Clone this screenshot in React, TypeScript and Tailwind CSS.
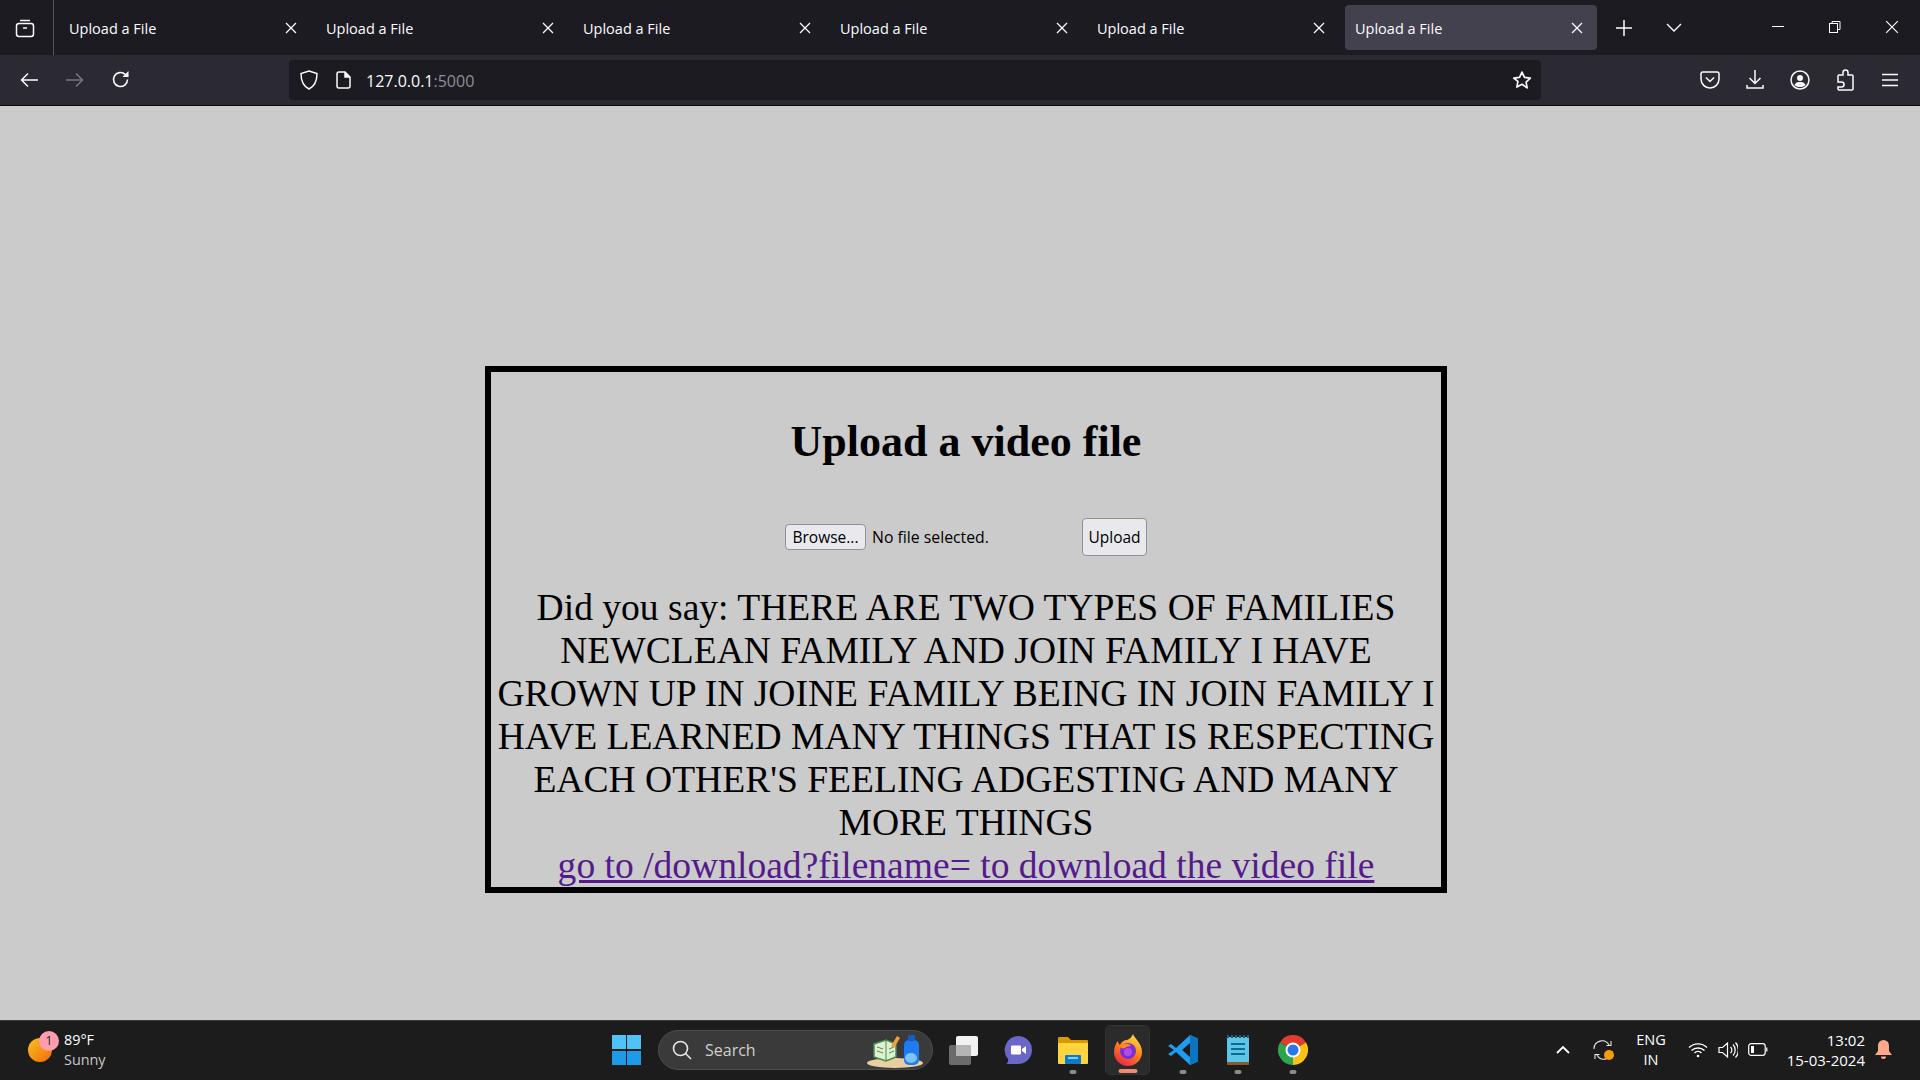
const ui = "font-['Open_Sans','Noto_Sans',sans-serif]";

const XIcon = ({ size = 12, w = 1.3 }: { size?: number; w?: number }) => (
  <svg width={size} height={size} viewBox="0 0 12 12" fill="none" stroke="#fbfbfe" strokeWidth={w}>
    <path d="M1 1l10 10M11 1L1 11" />
  </svg>
);

const Tab = ({ active }: { active?: boolean }) => (
  <div className={active ? "flex h-[45px] w-[252px] items-center justify-between rounded-[4px] bg-[#42414d] pl-[10px] pr-[14px]" : "flex h-[45px] w-[257px] items-center justify-between pl-[15px] pr-[14px]"}>
    <span className={`${ui} mt-[2px] text-[14.5px] text-[#fbfbfe]`}>Upload a File</span>
    <XIcon />
  </div>
);

const TabBar = () => (
  <div className="flex h-[55px] items-center bg-[#1c1b22]">
    <div className="flex h-[55px] w-[54px] items-center justify-center border-r border-[#55545c] pr-[4px]">
      <svg width="20" height="20" viewBox="0 0 20 20" fill="none" stroke="#fbfbfe" strokeWidth="1.5">
        <path d="M5 2.500h10" />
        <rect x="1.500" y="5.500" width="17" height="13" rx="2.500" />
        <path d="M8 10h4" />
      </svg>
    </div>
    <Tab />
    <Tab />
    <Tab />
    <Tab />
    <Tab />
    <div className="ml-[6px]">
      <Tab active />
    </div>
    <div className="ml-[19px] flex w-[16px] justify-center">
      <svg width="16" height="16" viewBox="0 0 16 16" fill="none" stroke="#fbfbfe" strokeWidth="1.5">
        <path d="M8 0v16M0 8h16" />
      </svg>
    </div>
    <div className="ml-[34px]">
      <svg width="16" height="10" viewBox="0 0 16 10" fill="none" stroke="#fbfbfe" strokeWidth="1.4">
        <path d="M1 1l7 7 7-7" />
      </svg>
    </div>
    <div className="ml-[90px] mb-[2px] h-px w-[12px] bg-[#fbfbfe]" />
    <div className="ml-[45px] mb-[2px]">
      <svg width="12" height="14" viewBox="0 0 12 14" fill="none" stroke="#fbfbfe" strokeWidth="1">
        <rect x="0.500" y="3.500" width="8" height="9" />
        <path d="M3 3.500V1.500h8v8H8.500" />
      </svg>
    </div>
    <div className="ml-[44px] mb-[2px]">
      <XIcon size={14} w={1} />
    </div>
  </div>
);

const ToolBar = () => (
  <div className="flex h-[51px] items-center border-b border-[#0c0c0d] bg-[#2b2a33] pb-px">
    <div className="ml-[20px]">
      <svg width="18" height="16" viewBox="0 0 18 16" fill="none" stroke="#fbfbfe" strokeWidth="1.5">
        <path d="M18 8H1.500M8 1.500L1.500 8 8 14.500" />
      </svg>
    </div>
    <div className="ml-[28px]">
      <svg width="18" height="16" viewBox="0 0 18 16" fill="none" stroke="#77767e" strokeWidth="1.5">
        <path d="M0 8h16.500M10 1.500L16.500 8 10 14.500" />
      </svg>
    </div>
    <div className="ml-[27px]">
      <svg width="19" height="19" viewBox="0 0 19 19" fill="none" stroke="#fbfbfe" strokeWidth="1.6">
        <path d="M16.500 9.500a7 7 0 1 1-2.300-5.200L17 6.500" />
        <path d="M17.500 1v6h-6" fill="#fbfbfe" stroke="none" />
      </svg>
    </div>
    <div className="ml-[159px] flex h-[40px] w-[1252px] items-center rounded-[4px] bg-[#1c1b22]">
      <div className="ml-[11px]">
        <svg width="18" height="20" viewBox="0 0 18 20" fill="none" stroke="#fbfbfe" strokeWidth="1.5">
          <path d="M9 1l8 2.500c0 7-2 12.500-8 15.500C3 16 1 10.500 1 3.500z" />
        </svg>
      </div>
      <div className="ml-[18px]">
        <svg width="15" height="18" viewBox="0 0 15 18" fill="none" stroke="#fbfbfe" strokeWidth="1.5">
          <path d="M3 1h6l5 5v9a2 2 0 0 1-2 2H3a2 2 0 0 1-2-2V3a2 2 0 0 1 2-2z" />
          <path d="M9 1v5h5" fill="#fbfbfe" />
        </svg>
      </div>
      <span className={`${ui} ml-[15px] mt-[3px] text-[16px] text-[#fbfbfe]`}>
        127.0.0.1<span className="text-[#8f8f94]">:5000</span>
      </span>
      <div className="ml-auto mr-[9px]">
        <svg width="20" height="20" viewBox="0 0 24 24" fill="none" stroke="#fbfbfe" strokeWidth="2" strokeLinejoin="round">
          <path d="M12 2.500l3 6.400 7 .9-5.100 4.800 1.300 6.900L12 17.100l-6.200 3.400 1.300-6.900L2 9.800l7-.9z" />
        </svg>
      </div>
    </div>
    <div className="ml-[159px]">
      <svg width="20" height="18" viewBox="0 0 20 18" fill="none" stroke="#fbfbfe" strokeWidth="1.5">
        <path d="M3 1h14a2 2 0 0 1 2 2v5a9 9 0 0 1-18 0V3a2 2 0 0 1 2-2z" />
        <path d="M6 6.500l4 4 4-4" />
      </svg>
    </div>
    <div className="ml-[26px]">
      <svg width="18" height="20" viewBox="0 0 18 20" fill="none" stroke="#fbfbfe" strokeWidth="1.5">
        <path d="M9 0v13M3.500 8L9 13.500 14.500 8M1 15v3h16v-3" />
      </svg>
    </div>
    <div className="ml-[26px]">
      <svg width="20" height="20" viewBox="0 0 20 20" fill="none" stroke="#fbfbfe" strokeWidth="1.5">
        <circle cx="10" cy="10" r="9" />
        <circle cx="10" cy="8" r="3" fill="#fbfbfe" stroke="none" />
        <path d="M4.500 15c1-2.500 3-3 5.500-3s4.500.5 5.500 3c-1.500 1.500-3.500 2-5.500 2s-4-.5-5.500-2z" fill="#fbfbfe" stroke="none" />
      </svg>
    </div>
    <div className="ml-[26px]">
      <svg width="18" height="22" viewBox="0 0 18 22" fill="none" stroke="#fbfbfe" strokeWidth="1.5">
        <path d="M7 3.500a2.500 2.500 0 0 1 5 0V6h4a1 1 0 0 1 1 1v13a1 1 0 0 1-1 1H3a1 1 0 0 1-1-1v-2h3.500a2 2 0 0 0 0-5H2V7a1 1 0 0 1 1-1h4z" />
      </svg>
    </div>
    <div className="ml-[28px]">
      <svg width="16" height="14" viewBox="0 0 16 14" fill="none" stroke="#fbfbfe" strokeWidth="1.5">
        <path d="M0 1.500h16M0 7h16M0 12.500h16" />
      </svg>
    </div>
  </div>
);

const UploadBox = () => (
  <div className="ml-[485px] mt-[260px] flex h-[527px] w-[962px] flex-col border-[6px] border-black">
    <h1 className="mt-[45px] text-center font-['Liberation_Serif',serif] text-[44px] font-bold leading-[49px] text-black">
      Upload a video file
    </h1>
    <div className={`${ui} mt-[52px] flex h-[38px] items-center text-black`}>
      <button className="ml-[294px] h-[26px] w-[81px] rounded-[4px] border border-[#8f8f9d] bg-[#e9e9ed] pt-px text-[15.5px]">
        Browse...
      </button>
      <span className="ml-[6px] mt-[2px] w-[210px] text-[15.8px]">No file selected.</span>
      <button className="h-[38px] w-[65px] rounded-[4px] border border-[#8f8f9d] bg-[#e9e9ed] pt-[2px] text-[15.5px]">
        Upload
      </button>
    </div>
    <div className="mt-[30px] text-center font-['Liberation_Serif',serif] text-[37.55px] leading-[43px] text-black">
      <p>
        Did you say: THERE ARE TWO TYPES OF FAMILIES NEWCLEAN FAMILY AND JOIN FAMILY I HAVE GROWN UP IN JOINE FAMILY
        BEING IN JOIN FAMILY I HAVE LEARNED MANY THINGS THAT IS RESPECTING EACH OTHER'S FEELING ADGESTING AND MANY MORE
        THINGS
      </p>
      <a href="#" className="text-[#551a8b] underline">
        go to /download?filename= to download the video file
      </a>
    </div>
  </div>
);

const Dot = () => <div className="absolute bottom-[5px] left-1/2 h-[4px] w-[7px] -translate-x-1/2 rounded-full bg-[#8b8b8b]" />;

const TaskView = () => (
  <svg width="30" height="30" viewBox="0 0 30 30">
    <rect x="1" y="10" width="22" height="20" rx="2" fill="#6b6b6b" />
    <rect x="8" y="1" width="22" height="20" rx="2" fill="#f2f2f2" />
    <rect x="8" y="10" width="15" height="11" fill="#b5b5b5" />
  </svg>
);

const Meet = () => (
  <svg width="30" height="30" viewBox="0 0 30 30">
    <path d="M15 1a14 14 0 0 1 0 28H3c2-1 2.500-3 2-5A14 14 0 0 1 15 1z" fill="#6a67c9" />
    <path d="M9 10.500h8a1 1 0 0 1 1 1v7a1 1 0 0 1-1 1H9a1 1 0 0 1-1-1v-7a1 1 0 0 1 1-1zM19 14l4-3v8l-4-3z" fill="#fff" />
  </svg>
);

const Explorer = () => (
  <svg width="30" height="30" viewBox="0 0 30 30">
    <path d="M0 3a1 1 0 0 1 1-1h9l3 3h16a1 1 0 0 1 1 1v6H0z" fill="#d69b00" />
    <path d="M0 8h30v20a1 1 0 0 1-1 1H1a1 1 0 0 1-1-1z" fill="#ffd43f" />
    <rect x="7" y="20" width="16" height="9" rx="1" fill="#0f79c9" />
    <rect x="10" y="22" width="10" height="2" fill="#7fd0ff" />
  </svg>
);

const Firefox = () => (
  <svg width="30" height="32" viewBox="0 0 30 32">
    <defs>
      <linearGradient id="ff" x1="0.7" y1="0" x2="0.2" y2="1">
        <stop offset="0" stopColor="#ffe03a" />
        <stop offset="0.5" stopColor="#ff7a1a" />
        <stop offset="1" stopColor="#e5224f" />
      </linearGradient>
    </defs>
    <path d="M20 0c1 4 9 9 9 18a14 14 0 0 1-28 0C1 13 3 9 5 7c0 2 1 3 2 4 1-3 4-5 7-5 3-1 5-3 6-6z" fill="url(#ff)" />
    <circle cx="15" cy="17" r="8" fill="#7b2fd0" />
    <path d="M7 12c4-3 9-3 11 0-3 0-5 1-6 2-2 1-4 0-5-2z" fill="#ff8a1f" />
    <circle cx="15" cy="18" r="4" fill="#b04ae8" />
  </svg>
);

const VSCode = () => (
  <svg width="30" height="30" viewBox="0 0 30 30">
    <path d="M22 0l8 3.500v23L22 30 8 17l-5 4-3-2 6-4-6-4 3-2 5 4z" fill="#1f9cf0" />
    <path d="M22 0l8 3.500v23L22 30z" fill="#0d75bd" />
    <path d="M22 8l-8 7 8 7z" fill="#1c1c1c" />
  </svg>
);

const Notepad = () => (
  <svg width="24" height="30" viewBox="0 0 24 30">
    <rect x="1" y="2" width="22" height="28" rx="1" fill="#5cc6e8" />
    <rect x="1" y="27" width="22" height="3" fill="#8a5a2b" />
    <path d="M2 0v3M6 0v3M10 0v3M14 0v3M18 0v3M22 0v3" stroke="#1c5f7a" strokeWidth="2" />
    <path d="M5 9h14M5 14h14M5 19h14" stroke="#0b6c8f" strokeWidth="2" />
  </svg>
);

const Chrome = () => (
  <svg width="30" height="30" viewBox="0 0 30 30">
    <path d="M15 15L2 7.500A15 15 0 0 1 28 7.500z" fill="#e33b2e" />
    <path d="M15 15L28 7.500A15 15 0 0 1 15 30z" fill="#fbc116" />
    <path d="M15 15L15 30A15 15 0 0 1 2 7.500z" fill="#2fa44f" />
    <circle cx="15" cy="15" r="7.500" fill="#fff" />
    <circle cx="15" cy="15" r="5.500" fill="#2a76e8" />
  </svg>
);

const SearchArt = () => (
  <svg width="58" height="34" viewBox="0 0 58 34">
    <ellipse cx="28" cy="29" rx="28" ry="5" fill="#e8cfa0" />
    <path d="M7 10l12-4 10 4v13l-10 4-12-4z" fill="#dff0d0" stroke="#4d8a4d" strokeWidth="1.500" />
    <path d="M19 6v21M10 13l6 2M10 17l6 2M22 15l5-2M22 19l5-2" stroke="#4d8a4d" strokeWidth="1" />
    <path d="M24 12l6-10 3 2-6 10z" fill="#f5a03a" />
    <rect x="37" y="6" width="15" height="25" rx="5" fill="#1f7cf0" />
    <rect x="41" y="1" width="7" height="6" rx="1" fill="#145ec2" />
    <ellipse cx="44" cy="24" rx="6" ry="5" fill="#7ac4ff" />
  </svg>
);

const TaskBar = () => (
  <div className={`${ui} flex h-[60px] items-center border-t border-[#3a3a3a] bg-[#1c1c1c] pb-[2px] text-white`}>
    <div className="relative ml-[28px] h-[24px] w-[24px] rounded-full bg-gradient-to-br from-[#f6c21c] to-[#f2650f]">
      <div className="absolute left-[11px] top-[-7px] flex h-[20px] w-[20px] items-center justify-center rounded-full bg-[#ff9db0] text-[12px] text-[#1c1c1c]">
        1
      </div>
    </div>
    <div className="ml-[12px] w-[80px] text-[14.4px] leading-[20px]">
      <div>89°F</div>
      <div className="text-[#c8c8c8]">Sunny</div>
    </div>
    <div className="ml-[468px] flex h-[30px] w-[29px] flex-wrap content-between justify-between">
      <div className="h-[14px] w-[14px] bg-[#4fc3f7]" />
      <div className="h-[14px] w-[14px] bg-[#4fc3f7]" />
      <div className="h-[14px] w-[14px] bg-[#1e9be8]" />
      <div className="h-[14px] w-[14px] bg-[#1e9be8]" />
    </div>
    <div className="ml-[17px] flex h-[40px] w-[275px] items-center rounded-full border border-[#4d4d4d] bg-[#3a3a3a]">
      <div className="ml-[13px]">
        <svg width="20" height="20" viewBox="0 0 20 20" fill="none" stroke="#e8e8e8" strokeWidth="1.600">
          <circle cx="8.500" cy="8.500" r="7" />
          <path d="M13.500 13.500L19 19" />
        </svg>
      </div>
      <span className="ml-[13px] text-[16px] text-[#d0d0d0]">Search</span>
      <div className="ml-auto mr-[7px] mt-[2px]">
        <SearchArt />
      </div>
    </div>
    <div className="ml-[2px] flex h-[58px] items-center">
      <div className="flex h-[58px] w-[55px] items-center justify-center">
        <TaskView />
      </div>
      <div className="flex h-[58px] w-[55px] items-center justify-center">
        <Meet />
      </div>
      <div className="relative flex h-[58px] w-[55px] items-center justify-center">
        <Explorer />
        <Dot />
      </div>
      <div className="flex h-[58px] w-[55px] items-center justify-center">
        <div className="relative flex h-[50px] w-[45px] items-center justify-center rounded-[5px] border border-[#333] bg-[#2b2b2b]">
          <Firefox />
          <div className="absolute bottom-[1px] left-1/2 h-[4px] w-[19px] -translate-x-1/2 rounded-full bg-[#f28a6f]" />
        </div>
      </div>
      <div className="relative flex h-[58px] w-[55px] items-center justify-center">
        <VSCode />
        <Dot />
      </div>
      <div className="relative flex h-[58px] w-[55px] items-center justify-center">
        <Notepad />
        <Dot />
      </div>
      <div className="relative flex h-[58px] w-[55px] items-center justify-center">
        <Chrome />
        <Dot />
      </div>
    </div>
    <div className="ml-[236px]">
      <svg width="14" height="9" viewBox="0 0 14 9" fill="none" stroke="#fff" strokeWidth="1.800">
        <path d="M1 8l6-6 6 6" />
      </svg>
    </div>
    <div className="relative ml-[23px]">
      <svg width="20" height="20" viewBox="0 0 20 20" fill="none" stroke="#e8e8e8" strokeWidth="1.100">
        <path d="M1 9a8 8 0 0 1 15-4M18 1v4.500h-4.500M19 11a8 8 0 0 1-15 4M2 19v-4.500h4.500" />
      </svg>
      <div className="absolute bottom-0 right-[-1px] h-[10px] w-[10px] rounded-full bg-[#f79a0e]" />
    </div>
    <div className="ml-[18px] w-[40px] text-center text-[14.5px] leading-[20px]">
      <div>ENG</div>
      <div>IN</div>
    </div>
    <div className="ml-[17px]">
      <svg width="20" height="16" viewBox="0 0 20 16" fill="none" stroke="#fff" strokeWidth="1.400">
        <path d="M1 5.500a13 13 0 0 1 18 0M3.500 8.500a9.500 9.500 0 0 1 13 0M6.500 11a5 5 0 0 1 7 0" />
        <circle cx="10" cy="14" r="1.300" fill="#fff" stroke="none" />
      </svg>
    </div>
    <div className="ml-[10px]">
      <svg width="20" height="18" viewBox="0 0 20 18" fill="none" stroke="#fff" strokeWidth="1.200">
        <path d="M1 6.500h3.500L9.500 2v14l-5-4.500H1zM12.500 6a4 4 0 0 1 0 6M15 3.500a8 8 0 0 1 0 11M17.500 1.500a11 11 0 0 1 0 15" />
      </svg>
    </div>
    <div className="ml-[10px]">
      <svg width="20" height="13" viewBox="0 0 20 13" fill="none" stroke="#fff" strokeWidth="1.200">
        <rect x="0.700" y="0.700" width="16.500" height="11.600" rx="2.500" />
        <rect x="3" y="3" width="3" height="7" fill="#fff" stroke="none" />
        <path d="M18.800 4.500v4" />
      </svg>
    </div>
    <div className="ml-[5px] w-[92px] text-right text-[15px] leading-[20px]">
      <div>13:02</div>
      <div>15-03-2024</div>
    </div>
    <div className="ml-[10px]">
      <svg width="17" height="20" viewBox="0 0 17 20" fill="#ffa78a">
        <path d="M8.500 0a5.500 5.500 0 0 1 5.500 5.500V11l3 4H0l3-4V5.500A5.500 5.500 0 0 1 8.500 0zM6 16.500h5a2.500 2.500 0 0 1-5 0z" />
      </svg>
    </div>
  </div>
);

export default function App() {
  return (
    <div className="flex h-[1080px] w-[1920px] flex-col overflow-hidden bg-[#cbcbcb]">
      <TabBar />
      <ToolBar />
      <main className="flex-1">
        <UploadBox />
      </main>
      <TaskBar />
    </div>
  );
}
